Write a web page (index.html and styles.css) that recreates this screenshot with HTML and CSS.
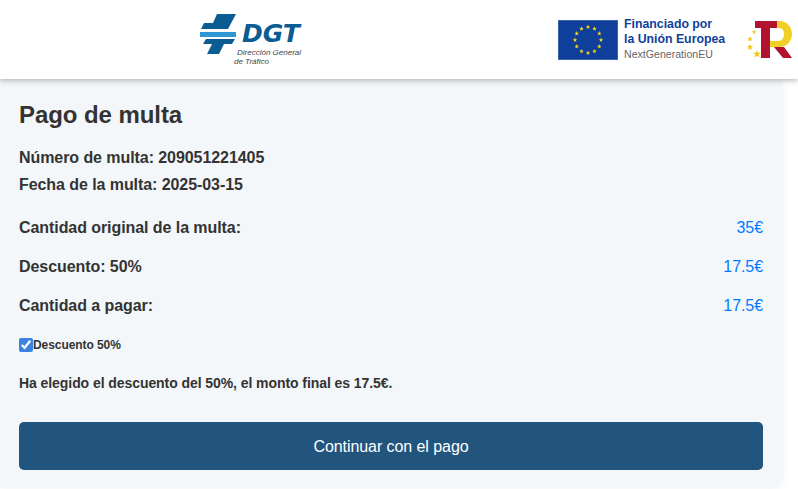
FILE: index.html
```html
<!DOCTYPE html>
<html lang="es">
<head>
<meta charset="utf-8">
<title>Pago de multa</title>
<link rel="stylesheet" href="styles.css">
</head>
<body>
<header class="topbar">
  <div class="dgt">
    <svg class="dgt-mark" width="37" height="41" viewBox="0 0 37 41">
      <path d="M17 0H36L28 15H1L4 9H13Z" fill="#0b5c93"/>
      <rect x="0" y="18" width="36" height="5" fill="#2f97d3"/>
      <path d="M6 25H35L32 30H24L19 40H7L12 30H3Z" fill="#0b5c93"/>
    </svg>
    <div class="dgt-words">
      <span class="dgt-name">DGT</span>
      <span class="dgt-sub l1">Dirección General</span>
      <span class="dgt-sub l2">de Tráfico</span>
    </div>
  </div>
  <div class="eu">
    <svg class="flag" width="60" height="40" viewBox="0 0 60 40">
      <defs>
        <polygon id="eu-star" points="0,-2.4 .6,-.8 2.3,-.8 .9,.3 1.4,2 0,1 -1.4,2 -.9,.3 -2.3,-.8 -.6,-.8" fill="#ffd617"/>
      </defs>
      <rect x=".5" y=".5" width="59" height="39" fill="#0f3f9b" stroke="#3f66ad"/>
      <use href="#eu-star" x="30" y="7"/><use href="#eu-star" x="36.5" y="8.7"/><use href="#eu-star" x="41.3" y="13.5"/><use href="#eu-star" x="43" y="20"/><use href="#eu-star" x="41.3" y="26.5"/><use href="#eu-star" x="36.5" y="31.3"/><use href="#eu-star" x="30" y="33"/><use href="#eu-star" x="23.5" y="31.3"/><use href="#eu-star" x="18.7" y="26.5"/><use href="#eu-star" x="17" y="20"/><use href="#eu-star" x="18.7" y="13.5"/><use href="#eu-star" x="23.5" y="8.7"/>
    </svg>
    <div class="eu-text">
      <span class="eu-blue">Financiado por</span>
      <span class="eu-blue">la Unión Europea</span>
      <span class="eu-grey">NextGenerationEU</span>
    </div>
  </div>
  <svg class="tr" width="46" height="40" viewBox="0 0 46 40">
    <defs>
      <polygon id="tr-star" points="0,-1 .3,-.3 1,-.3 .45,.15 .65,.9 0,.45 -.65,.9 -.45,.15 -1,-.3 -.3,-.3" fill="#f5c518"/>
    </defs>
    <use href="#tr-star" transform="translate(7 12) scale(2.2)"/>
    <use href="#tr-star" transform="translate(3 19) scale(2.8)"/>
    <use href="#tr-star" transform="translate(3 27) scale(3.2)"/>
    <use href="#tr-star" transform="translate(10 34) scale(3.8)"/>
    <path d="M30 1H32C40 1 45 7 45 14C45 21 40 27 32 27H23V21H31C35 21 37 18 37 14C37 10 35 8 31 8H30Z" fill="#f2cf27"/>
    <path d="M8 1H30V8H23V38H14V8H8Z" fill="#b3122f"/>
    <path d="M27 27H37L45 38H36Z" fill="#b3122f"/>
  </svg>
</header>
<main class="card">
  <h1 class="title">Pago de multa</h1>
  <p class="meta">Número de multa: 209051221405</p>
  <p class="meta">Fecha de la multa: 2025-03-15</p>
  <div class="rows">
    <div class="row"><span class="label">Cantidad original de la multa:</span><span class="value">35€</span></div>
    <div class="row"><span class="label">Descuento: 50%</span><span class="value">17.5€</span></div>
    <div class="row"><span class="label">Cantidad a pagar:</span><span class="value">17.5€</span></div>
  </div>
  <label class="check"><input type="checkbox" checked>Descuento 50%</label>
  <p class="note">Ha elegido el descuento del 50%, el monto final es 17.5€.</p>
  <button class="pay" type="button">Continuar con el pago</button>
</main>
</body>
</html>
```
FILE: styles.css
```css
* { box-sizing: border-box; }
html, body { margin: 0; padding: 0; }
body {
  background: #fff;
  color: #333;
  font-family: "Liberation Sans", Arial, sans-serif;
  height: 489px;
  overflow: hidden;
}
.topbar {
  height: 79px;
  background: #fff;
  display: flex;
  align-items: center;
  padding-left: 200px;
  padding-right: 5px;
  box-shadow: 0 2px 5px rgba(0,0,0,.25);
  position: relative;
}
.dgt { display: flex; align-items: flex-start; width: 101px; height: 52px; margin-top: 1px; }
.dgt-mark { flex: none; display: block; }
.dgt-words { display: flex; flex-direction: column; padding-top: 9px; }
.dgt-name {
  font-family: "DejaVu Sans", sans-serif;
  font-size: 25px;
  line-height: 22px;
  font-weight: bold;
  font-style: italic;
  color: #0b5c93;
  margin-left: 5px;
}
.dgt-sub { font-size: 8px; line-height: 9px; font-style: italic; color: #444; white-space: nowrap; }
.l1 { margin-top: 3px; }
.l2 { margin-left: -3px; }
.eu { display: flex; align-items: center; gap: 6px; margin-left: auto; }
.flag { flex: none; display: block; }
.eu-text { display: flex; flex-direction: column; width: 101px; font-size: 12.3px; line-height: 15px; white-space: nowrap; }
.eu-blue { font-weight: bold; color: #0f3f9b; }
.eu-grey { font-size: 10.6px; color: #666; }
.tr { margin-left: 22px; flex: none; }
.card {
  width: 782px;
  height: 408px;
  background: #f4f7fa;
  border-radius: 0 0 8px 0;
  padding: 22px 19px 0;
  box-shadow: 0 0 8px rgba(0,0,0,.08);
  letter-spacing: -.07px;
}
.title { margin: 0 0 15px; font-size: 24px; line-height: 28px; font-weight: bold; }
.meta { margin: 0; font-size: 16px; line-height: 27px; font-weight: bold; }
.rows { margin-top: 21px; display: flex; flex-direction: column; gap: 21px; }
.row { display: flex; justify-content: space-between; font-size: 16px; line-height: 18px; }
.label { font-weight: bold; }
.value { color: #007bff; }
.check { display: flex; align-items: center; margin-top: 23px; font-size: 12px; line-height: 14px; font-weight: bold; }
.check input { margin: 0; width: 14px; height: 14px; accent-color: #3b82e0; }
.note { margin: 23px 0 0; font-size: 14px; line-height: 16px; font-weight: bold; }
.pay {
  display: block;
  width: 100%;
  height: 48px;
  margin-top: 31px;
  padding: 2px 0 0;
  border: 0;
  border-radius: 5px;
  background: #22557d;
  color: #fff;
  font-family: inherit;
  font-size: 16px;
  letter-spacing: inherit;
}
```
